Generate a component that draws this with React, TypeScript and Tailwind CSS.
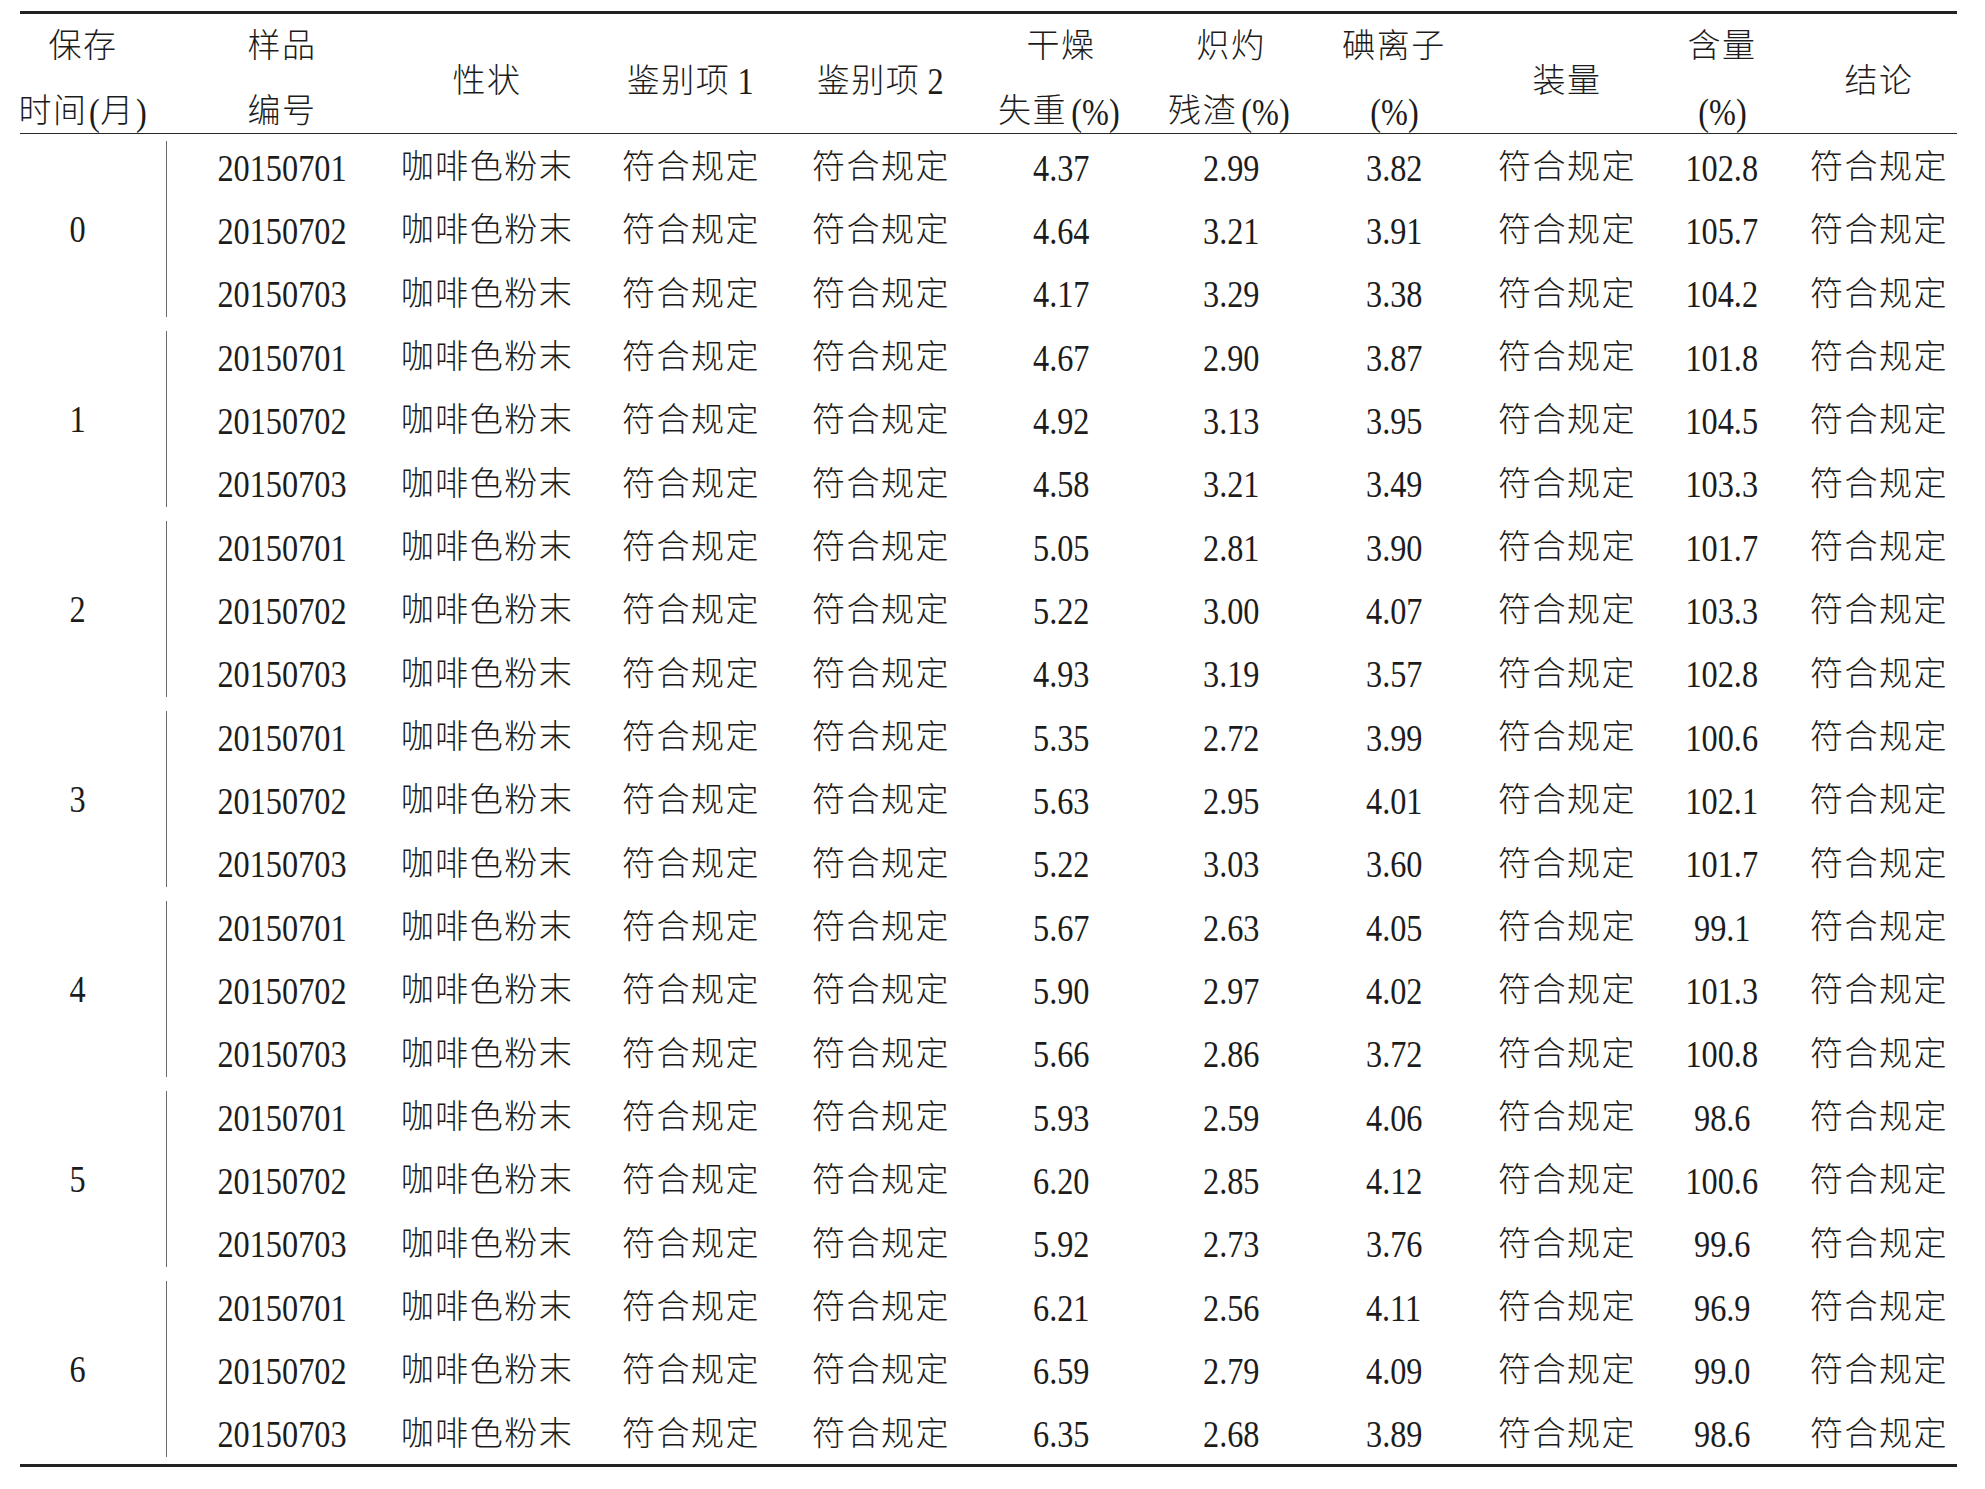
import React from "react";

const COLS =
  "grid grid-cols-[147px_230px_180px_228px_152px_208px_132px_194px_152px_158px_156px]";
const DATA_COLS =
  "grid grid-cols-[230px_180px_228px_152px_208px_132px_194px_152px_158px_156px] grid-rows-3";

function Num({ children }: { children: React.ReactNode }) {
  return (
    <span className="inline-block shrink-0 whitespace-nowrap scale-x-[0.85] text-[38px] leading-none">
      {children}
    </span>
  );
}

function Zh({ children }: { children: React.ReactNode }) {
  return (
    <span className="inline-block shrink-0 whitespace-nowrap text-[33px] tracking-[1.5px] font-light leading-none">
      {children}
    </span>
  );
}

function Pct() {
  return <Num>(%)</Num>;
}

const groups: { t: string; rows: [string, string, string, string][] }[] = [
  { t: "0", rows: [["4.37", "2.99", "3.82", "102.8"], ["4.64", "3.21", "3.91", "105.7"], ["4.17", "3.29", "3.38", "104.2"]] },
  { t: "1", rows: [["4.67", "2.90", "3.87", "101.8"], ["4.92", "3.13", "3.95", "104.5"], ["4.58", "3.21", "3.49", "103.3"]] },
  { t: "2", rows: [["5.05", "2.81", "3.90", "101.7"], ["5.22", "3.00", "4.07", "103.3"], ["4.93", "3.19", "3.57", "102.8"]] },
  { t: "3", rows: [["5.35", "2.72", "3.99", "100.6"], ["5.63", "2.95", "4.01", "102.1"], ["5.22", "3.03", "3.60", "101.7"]] },
  { t: "4", rows: [["5.67", "2.63", "4.05", "99.1"], ["5.90", "2.97", "4.02", "101.3"], ["5.66", "2.86", "3.72", "100.8"]] },
  { t: "5", rows: [["5.93", "2.59", "4.06", "98.6"], ["6.20", "2.85", "4.12", "100.6"], ["5.92", "2.73", "3.76", "99.6"]] },
  { t: "6", rows: [["6.21", "2.56", "4.11", "96.9"], ["6.59", "2.79", "4.09", "99.0"], ["6.35", "2.68", "3.89", "98.6"]] },
];

const ids = ["20150701", "20150702", "20150703"];

function H2({ a, b, className = "" }: { a: React.ReactNode; b: React.ReactNode; className?: string }) {
  return (
    <div className={"flex flex-col items-center justify-center pb-[6px] " + className}>
      <div className="h-[65px] flex items-center whitespace-nowrap">{a}</div>
      <div className="h-[65px] flex items-center whitespace-nowrap">{b}</div>
    </div>
  );
}

function H1({ children }: { children: React.ReactNode }) {
  return <div className="flex items-center justify-center pb-[2px] whitespace-nowrap">{children}</div>;
}

export default function App() {
  return (
    <div className="w-[1985px] h-[1489px] bg-white pt-[11px] pl-[20px] text-[#1c1c1c] font-['Liberation_Serif','Noto_Sans_CJK_SC',serif]">
      <div className="w-[1937px] border-t-[3px] border-b-[3px] border-[#222]">
        {/* header */}
        <div className={COLS + " h-[120px] border-b-[1.5px] border-[#2a2a2a]"}>
          <H2
            className="pr-[21px]"
            a={<Zh>保存</Zh>}
            b={
              <span className="inline-flex items-center shrink-0">
                <Zh>时间</Zh>
                <Num>(</Num>
                <Zh>月</Zh>
                <Num>)</Num>
              </span>
            }
          />
          <H2 a={<Zh>样品</Zh>} b={<Zh>编号</Zh>} />
          <H1>
            <Zh>性状</Zh>
          </H1>
          <H1>
            <span className="inline-flex items-center gap-[6px]">
              <Zh>鉴别项</Zh>
              <Num>1</Num>
            </span>
          </H1>
          <H1>
            <span className="inline-flex items-center gap-[6px]">
              <Zh>鉴别项</Zh>
              <Num>2</Num>
            </span>
          </H1>
          <H2
            a={<Zh>干燥</Zh>}
            b={
              <span className="inline-flex items-center">
                <Zh>失重</Zh>
                <Pct />
              </span>
            }
          />
          <H2
            a={<Zh>炽灼</Zh>}
            b={
              <span className="inline-flex items-center">
                <Zh>残渣</Zh>
                <Pct />
              </span>
            }
          />
          <H2 a={<Zh>碘离子</Zh>} b={<Pct />} />
          <H1>
            <Zh>装量</Zh>
          </H1>
          <H2 a={<Zh>含量</Zh>} b={<Pct />} />
          <H1>
            <Zh>结论</Zh>
          </H1>
        </div>

        {/* body */}
        {groups.map((g) => (
          <div key={g.t} className="flex h-[190px]">
            <div className="flex w-[147px]">
              <div className="flex-1 flex items-center justify-center pr-[30px]">
                <Num>{g.t}</Num>
              </div>
              <div className="w-[1.5px] my-[7px] bg-[#6a6a6a]" />
            </div>
            <div className={DATA_COLS + " flex-1"}>
              {g.rows.map((r, i) => (
                <React.Fragment key={i}>
                  <div className="flex items-center justify-center pt-[4px]">
                    <Num>{ids[i]}</Num>
                  </div>
                  <div className="flex items-center justify-center pt-[4px]">
                    <Zh>咖啡色粉末</Zh>
                  </div>
                  <div className="flex items-center justify-center pt-[4px]">
                    <Zh>符合规定</Zh>
                  </div>
                  <div className="flex items-center justify-center pt-[4px]">
                    <Zh>符合规定</Zh>
                  </div>
                  <div className="flex items-center justify-center pt-[4px]">
                    <Num>{r[0]}</Num>
                  </div>
                  <div className="flex items-center justify-center pt-[4px]">
                    <Num>{r[1]}</Num>
                  </div>
                  <div className="flex items-center justify-center pt-[4px]">
                    <Num>{r[2]}</Num>
                  </div>
                  <div className="flex items-center justify-center pt-[4px]">
                    <Zh>符合规定</Zh>
                  </div>
                  <div className="flex items-center justify-center pt-[4px]">
                    <Num>{r[3]}</Num>
                  </div>
                  <div className="flex items-center justify-center pt-[4px]">
                    <Zh>符合规定</Zh>
                  </div>
                </React.Fragment>
              ))}
            </div>
          </div>
        ))}
      </div>
    </div>
  );
}
